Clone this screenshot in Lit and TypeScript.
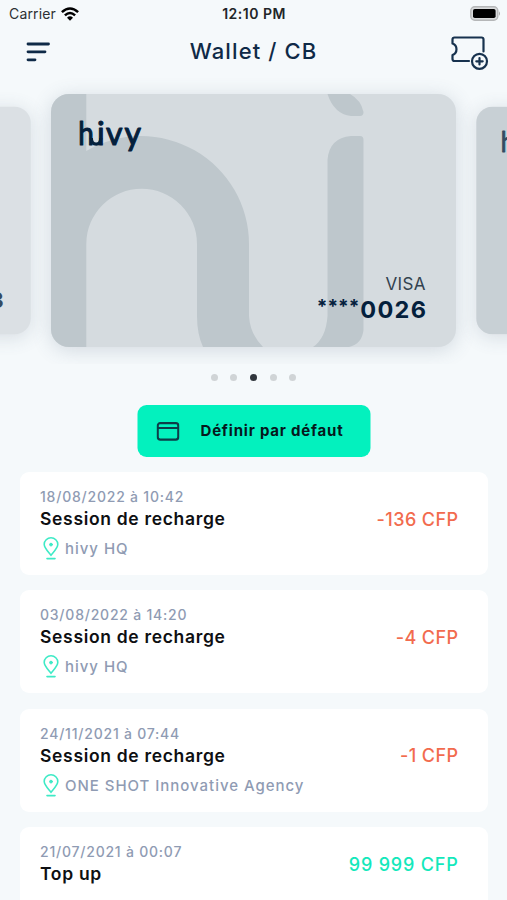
import { LitElement, html, css, svg, nothing } from "lit";
import { customElement, property } from "lit/decorators.js";

@customElement("bank-card")
class BankCard extends LitElement {
  @property() digits = "";
  @property() brand = "";
  static styles = css`
    :host { display: block; flex: none; width: 405px; height: 253px; border-radius: 18px; background: #d5dbdf;
      box-shadow: 0 3px 20px rgba(70, 90, 115, 0.2); }
    .face { display: grid; width: 405px; height: 253px; border-radius: 18px; overflow: hidden; }
    .art { grid-area: 1 / 1; display: block; }
    .info { grid-area: 1 / 1; align-self: end; justify-self: end; padding: 0 30px 24px 0; text-align: right; color: #04203c;
      font-family: Inter, sans-serif; }
    .brand { font-size: 17px; line-height: 24px; color: #33424f; letter-spacing: 0.4px; }
    .number { display: flex; justify-content: flex-end; align-items: center; height: 27px; line-height: 27px; font-size: 23.5px; font-weight: 700; letter-spacing: 1.3px; margin-right: -1.3px; }
    .stars { font-size: 19px; letter-spacing: 0; padding-bottom: 6px; margin-right: 1px; line-height: 21px; }
    .logo { font-family: Lato, sans-serif; font-size: 32px; font-weight: 400; fill: #04203c; stroke: #04203c; stroke-width: 1.1; stroke-linejoin: round; }
  `;
  render() {
    return html`<div class="face">
      <svg class="art" width="405" height="253" viewBox="0 0 405 253">
        <g fill="#bec7cc">
          <path d="M0 0H35.3V57A108 108 0 0 1 198 150V222Q199 240 212 253H152Q146 240 146 222V150A55.3 55.3 0 0 0 35.3 150V253H0Z" />
          <path d="M276.5 66Q278 44 300 42H309Q312.5 42 312.5 46V236Q311 250 298 253H262Q275 244 276.5 222Z" />
          <path d="M276.5 0H299Q310 6 312.5 18Q312.5 22 309 22H300Q283 20 276.5 0Z" />
        </g>
        <text class="logo" x="27.2" y="50.5" textLength="15.5" lengthAdjust="spacingAndGlyphs">h</text>
        <text class="logo" y="50.5"><tspan x="46">i</tspan><tspan x="55">v</tspan><tspan x="73.5">y</tspan></text>
        <path d="M40.3 44Q40.5 50.2 45.2 50.2Q49.6 50.2 49.8 44" fill="none" stroke="#04203c" stroke-width="3.2" />
      </svg>
      <div class="info">
        <div class="brand">${this.brand}</div>
        <div class="number"><span class="stars">****</span><span>${this.digits}</span></div>
      </div>
    </div>`;
  }
}

interface Entry { date: string; title: string; place?: string; amount: string; kind: string }

const entries: Entry[] = [
  { date: "18/08/2022 à 10:42", title: "Session de recharge", place: "hivy HQ", amount: "-136 CFP", kind: "debit" },
  { date: "03/08/2022 à 14:20", title: "Session de recharge", place: "hivy HQ", amount: "-4 CFP", kind: "debit" },
  { date: "24/11/2021 à 07:44", title: "Session de recharge", place: "ONE SHOT Innovative Agency", amount: "-1 CFP", kind: "debit" },
  { date: "21/07/2021 à 00:07", title: "Top up", amount: "99 999 CFP", kind: "credit" },
];

const pin = svg`<svg class="pin" width="16" height="23" viewBox="0 0 16 23" fill="none" stroke="#3eeac6" stroke-width="1.6" stroke-linecap="round">
  <path d="M8 18.2C5.6 15.3 1.2 11.2 1.2 7.3a6.8 6.5 0 0 1 13.6 0C14.8 11.2 10.4 15.3 8 18.2Z" />
  <circle cx="8" cy="7.6" r="1.4" fill="#3eeac6" stroke-width="1" /><path d="M4 21.6H12" />
</svg>`;

@customElement("app-root")
class AppRoot extends LitElement {
  static styles = css`
    :host { display: block; height: 900px; overflow: hidden; background: #f5f9fb; font-family: Inter, "Liberation Sans", sans-serif; color: #0e0f12; }
    .status { display: grid; grid-template-columns: 1fr auto 1fr; height: 27px; align-items: center; padding: 0 6px 0 9px; font-size: 14px; }
    .carrier { display: flex; align-items: center; gap: 5.5px; color: #2d3033; letter-spacing: 0.15px; }
    .time { font-weight: 600; letter-spacing: 0.5px; color: #222528; margin-right: 2px; }
    .battery { justify-self: end; }
    .bar { display: grid; grid-template-columns: 1fr auto 1fr; height: 50px; align-items: center; padding: 0 18px; color: #0f2a47; }
    .menu { margin-left: 8px; }
    .bar h1 { margin: 0 0 2px; font-size: 22px; line-height: 28px; font-weight: 500; letter-spacing: 1.1px; }
    .ticket { justify-self: end; margin-top: 1px; }
    .carousel { display: flex; justify-content: center; align-items: center; height: 287px; overflow: hidden; }
    .side { transform: scale(0.9); opacity: 0.8; }
    .dots { display: flex; justify-content: center; gap: 12.6px; padding: 10px 0 0; height: 32px; box-sizing: border-box; }
    .dot { width: 7px; height: 7px; border-radius: 50%; background: #d0d4d6; }
    .dot.on { background: #30363c; }
    .action { display: flex; align-items: center; width: 233px; height: 52px; box-sizing: border-box; margin: 9px auto 15px; transform: translateX(0.5px);
      padding: 0 19px; border: 0; border-radius: 9px; background: #03f1be; font: 700 15px/20px Inter, sans-serif; color: #06191d; gap: 21px; letter-spacing: 0.8px; white-space: nowrap; }
    .list { display: flex; flex-direction: column; gap: 15.4px; padding: 0 19px 0 20px; }
    .item { display: flex; flex: none; justify-content: space-between; align-items: center; height: 103px; box-sizing: border-box; padding: 15px 30px 16px 20px; border-radius: 9px; background: #fff; }
    .item.plain { align-items: flex-start; }
    .date { font-size: 14px; line-height: 20px; font-weight: 500; color: #8f9bb3; letter-spacing: 0.78px; }
    .title { font-size: 17.5px; line-height: 23px; font-weight: 600; letter-spacing: 0.68px; }
    .place { display: flex; align-items: center; gap: 6px; margin: 8px 0 0 3px; height: 21px; font-size: 15px; font-weight: 500; color: #8f9bb3; letter-spacing: 0.97px; }
    .amount { font-size: 18px; line-height: 22px; font-weight: 500; letter-spacing: 0.4px; margin: 0 -0.4px 7px 0; }
    .plain .amount { margin: 11.5px -0.5px 0 0; letter-spacing: 0.8px; }
    .debit { color: #f26b4e; }
    .credit { color: #13e8bb; }
  `;
  render() {
    return html`
      <div class="status">
        <div class="carrier"><span>Carrier</span>
          <svg width="18" height="14" viewBox="0 0 18 14" fill="none" stroke="#000" stroke-width="2.5">
            <path d="M0.9 5.2Q9-2.3 17.1 5.2" /><path d="M3.9 8.4Q9 3.6 14.1 8.4" /><path d="M6 10.7Q9 8 12 10.7L9 13.8Z" fill="#000" stroke="none" />
          </svg>
        </div>
        <div class="time">12:10 PM</div>
        <svg class="battery" width="31" height="15" viewBox="0 0 31 15">
          <rect x="0.8" y="0.8" width="27" height="13.4" rx="4" fill="#d9dbdc" stroke="#b5b7b8" stroke-width="1.4" />
          <rect x="3" y="3" width="22.6" height="9" rx="1.8" fill="#000" /><path d="M29 5.2Q31 7.5 29 9.8Z" fill="#aaa" />
        </svg>
      </div>
      <div class="bar">
        <svg class="menu" width="25" height="20" viewBox="0 0 25 20" stroke="#0f2a47" stroke-width="2.8" stroke-linecap="round"><path d="M2 2H22.5M2 9.8H19M2 17.8H9" /></svg>
        <h1>Wallet / CB</h1>
        <svg class="ticket" width="39" height="34" viewBox="0 0 39 34" fill="none" stroke="#17324e" stroke-width="2.2" stroke-linecap="round" stroke-linejoin="round">
          <path d="M33.5 15.5V3.5Q33.5 1.5 31.5 1.5H4.5Q2.5 1.5 2.5 3.5V7.5C7.8 9.5 7.8 17 2.5 19V23Q2.5 25 4.5 25H19" />
          <circle cx="29.5" cy="25.3" r="7.5" /><path d="M26.3 25.3H32.7M29.5 22.1V28.5" />
        </svg>
      </div>
      <div class="carousel">
        <bank-card class="side" digits="4283"></bank-card>
        <bank-card brand="VISA" digits="0026"></bank-card>
        <bank-card class="side"></bank-card>
      </div>
      <div class="dots">${[0, 1, 2, 3, 4].map((i) => html`<span class="dot ${i === 2 ? "on" : ""}"></span>`)}</div>
      <button class="action">
        <svg width="23" height="19" viewBox="0 0 23 19" fill="none" stroke="#0d3d48" stroke-width="2.2"><rect x="1.2" y="1.2" width="20.6" height="16.4" rx="2.5" /><path d="M1.2 6H21.8" /></svg>
        <span>Définir par défaut</span>
      </button>
      <div class="list">${entries.map((e) => html`
        <div class="item ${e.place ? "" : "plain"}">
          <div>
            <div class="date">${e.date}</div>
            <div class="title">${e.title}</div>
            ${e.place ? html`<div class="place">${pin}<span>${e.place}</span></div>` : nothing}
          </div>
          <div class="amount ${e.kind}">${e.amount}</div>
        </div>`)}
      </div>`;
  }
}
